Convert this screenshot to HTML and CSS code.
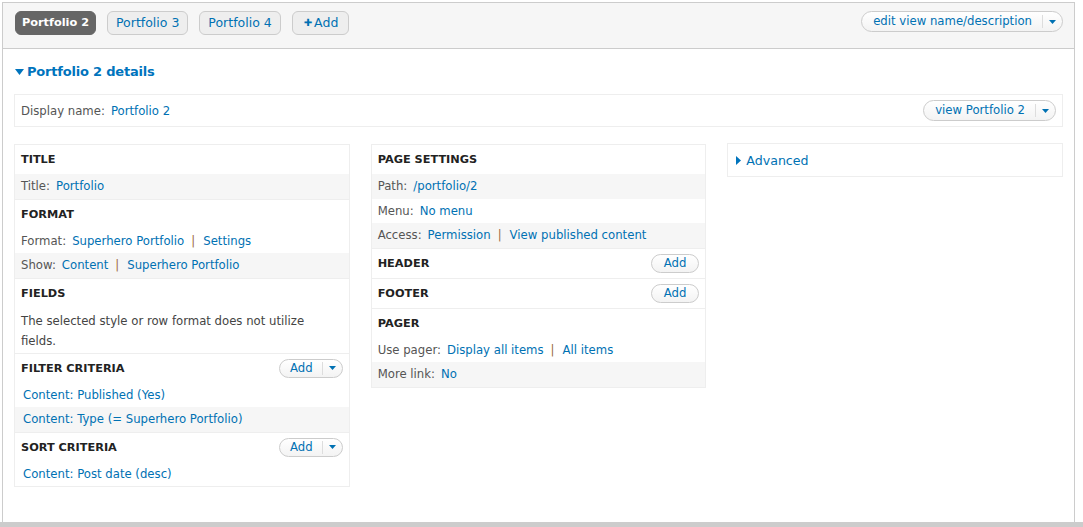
FILE: index.html
```html
<!DOCTYPE html>
<html>
<head>
<meta charset="utf-8">
<link rel="stylesheet" href="styles.css">
</head>
<body>
<div class="view">
  <div class="tabs-bar">
    <ul class="tabs">
      <li class="tab active">Portfolio 2</li>
      <li class="tab">Portfolio 3</li>
      <li class="tab">Portfolio 4</li>
      <li class="tab add"><span class="plus">✚</span>Add</li>
    </ul>
    <div class="dropbutton">
      <span class="db-main">edit view name/description</span>
      <span class="db-toggle"><svg width="7" height="4" viewBox="0 0 7 4"><path d="M0 0h7L3.5 4z" fill="#0071b3"/></svg></span>
    </div>
  </div>

  <div class="content">
    <h2 class="details-title"><svg class="tri-down" width="9" height="6" viewBox="0 0 9 6"><path d="M0 0h9L4.5 6z" fill="#0074bd"/></svg>Portfolio 2 details</h2>

    <div class="display-name">
      <div><span class="label">Display name:</span><a>Portfolio 2</a></div>
      <div class="dropbutton">
        <span class="db-main">view Portfolio 2</span>
        <span class="db-toggle"><svg width="7" height="4" viewBox="0 0 7 4"><path d="M0 0h7L3.5 4z" fill="#0071b3"/></svg></span>
      </div>
    </div>

    <div class="columns">
      <div class="col box">
        <section class="sec first">
          <div class="sec-head"><h3>Title</h3></div>
          <div class="row alt"><span class="label">Title:</span><a>Portfolio</a></div>
        </section>
        <section class="sec">
          <div class="sec-head"><h3>Format</h3></div>
          <div class="row"><span class="label">Format:</span><a>Superhero Portfolio</a><span class="sep">|</span><a>Settings</a></div>
          <div class="row alt"><span class="label">Show:</span><a>Content</a><span class="sep">|</span><a>Superhero Portfolio</a></div>
        </section>
        <section class="sec">
          <div class="sec-head"><h3>Fields</h3></div>
          <p class="note">The selected style or row format does not utilize fields.</p>
        </section>
        <section class="sec">
          <div class="sec-head"><h3>Filter criteria</h3>
            <div class="dropbutton small">
              <span class="db-main">Add</span>
              <span class="db-toggle"><svg width="7" height="4" viewBox="0 0 7 4"><path d="M0 0h7L3.5 4z" fill="#0071b3"/></svg></span>
            </div>
          </div>
          <div class="row ind"><a>Content: Published (Yes)</a></div>
          <div class="row ind alt"><a>Content: Type (= Superhero Portfolio)</a></div>
        </section>
        <section class="sec">
          <div class="sec-head"><h3>Sort criteria</h3>
            <div class="dropbutton small">
              <span class="db-main">Add</span>
              <span class="db-toggle"><svg width="7" height="4" viewBox="0 0 7 4"><path d="M0 0h7L3.5 4z" fill="#0071b3"/></svg></span>
            </div>
          </div>
          <div class="row ind"><a>Content: Post date (desc)</a></div>
        </section>
      </div>

      <div class="col box">
        <section class="sec first">
          <div class="sec-head"><h3>Page settings</h3></div>
          <div class="row alt"><span class="label">Path:</span><a>/portfolio/2</a></div>
          <div class="row"><span class="label">Menu:</span><a>No menu</a></div>
          <div class="row alt"><span class="label">Access:</span><a>Permission</a><span class="sep">|</span><a>View published content</a></div>
        </section>
        <section class="sec">
          <div class="sec-head"><h3>Header</h3><span class="btn-add">Add</span></div>
        </section>
        <section class="sec">
          <div class="sec-head"><h3>Footer</h3><span class="btn-add">Add</span></div>
        </section>
        <section class="sec">
          <div class="sec-head"><h3>Pager</h3></div>
          <div class="row"><span class="label">Use pager:</span><a>Display all items</a><span class="sep">|</span><a>All items</a></div>
          <div class="row alt"><span class="label">More link:</span><a>No</a></div>
        </section>
      </div>

      <div class="col">
        <div class="box advanced">
          <svg class="tri-right" width="5" height="9" viewBox="0 0 5 9"><path d="M0 0L5 4.5L0 9z" fill="#0074bd"/></svg><a>Advanced</a>
        </div>
      </div>
    </div>
  </div>
</div>
<div class="bottom-bar"></div>
</body>
</html>
```

FILE: styles.css
```css
html, body {
  margin: 0;
  padding: 0;
  background: #fff;
}
body {
  font-family: "DejaVu Sans", "Liberation Sans", sans-serif;
  font-size: 11.7px;
  color: #444;
}
a {
  color: #0071b3;
  text-decoration: none;
}
.view {
  box-sizing: border-box;
  margin: 2px 8px 0 2px;
  height: 520px;
  border: 1px solid #ccc;
  border-bottom: none;
}
.bottom-bar {
  height: 5px;
  background: #ccc;
}
.tabs-bar {
  height: 45px;
  background: #f6f6f6;
  border-bottom: 1px solid #ccc;
  display: flex;
  justify-content: space-between;
  align-items: flex-start;
  padding: 0 11px 0 12px;
}
.tabs {
  list-style: none;
  margin: 8px 0 0;
  padding: 0;
  display: flex;
  gap: 11px;
}
.tab {
  box-sizing: border-box;
  height: 24px;
  line-height: 22px;
  padding: 0 8px;
  border: 1px solid #ccc;
  border-radius: 6px;
  background: #eee;
  color: #0071b3;
  font-size: 12.5px;
}
.tab.active {
  background: #666;
  border-color: #666;
  color: #fff;
  font-weight: bold;
  font-size: 11.3px;
  padding: 0 6px;
}
.tab.add {
  padding: 0 10px 0 11px;
}
.plus {
  font-size: 10px;
  margin-right: 2px;
  position: relative;
  top: -1px;
}
.dropbutton {
  box-sizing: border-box;
  height: 21px;
  display: inline-flex;
  align-items: center;
  border: 1px solid #ccc;
  border-radius: 11px;
  background: linear-gradient(#fff, #f3f3f3);
  color: #0071b3;
  margin-top: 8px;
  white-space: nowrap;
}
.db-main {
  padding: 0 10px 0 11px;
  line-height: 19px;
}
.db-toggle {
  height: 13px;
  border-left: 1px solid #ddd;
  padding: 0 6px 0 6px;
  display: flex;
  align-items: center;
}
.content {
  padding: 14px 11px 0;
}
.details-title {
  margin: 0;
  font-size: 13px;
  letter-spacing: -0.2px;
  line-height: 18px;
  color: #0074bd;
  font-weight: bold;
  display: flex;
  align-items: center;
}
.tri-down {
  margin: 0 3px 0 1px;
}
.display-name {
  box-sizing: border-box;
  height: 33px;
  margin-top: 13px;
  border: 1px solid #eee;
  display: flex;
  justify-content: space-between;
  align-items: center;
  padding: 0 6px 0 6px;
}
.display-name .dropbutton {
  margin-top: 0;
  height: 21px;
}
.label {
  color: #555;
  margin-right: 6px;
}
.columns {
  margin-top: 17px;
  display: grid;
  grid-template-columns: 1fr 1fr 1fr;
  gap: 21px;
  align-items: start;
}
.box {
  border: 1px solid #eee;
}
.sec {
  border-top: 1px solid #eee;
}
.sec.first {
  border-top: none;
}
.sec-head {
  height: 29px;
  display: flex;
  justify-content: space-between;
  align-items: center;
  padding: 0 6px 0 6px;
}
.sec-head h3 {
  margin: 0;
  font-size: 11.3px;
  font-weight: bold;
  text-transform: uppercase;
  color: #222;
}
.row {
  height: 24.5px;
  line-height: 24px;
  padding: 0 6px;
  white-space: nowrap;
}
.row.alt {
  background: #f6f6f6;
}
.row.ind {
  padding-left: 8px;
}
.sep {
  color: #9a6a3e;
  margin: 0 8px 0 7px;
}
.note {
  margin: 0;
  padding: 3px 6px 2px;
  line-height: 20px;
  color: #444;
}
.dropbutton.small {
  height: 19px;
  margin-top: 0;
}
.dropbutton.small .db-main {
  padding: 0 9px 0 10px;
}
.btn-add {
  box-sizing: border-box;
  height: 19px;
  line-height: 17px;
  padding: 0 12px;
  border: 1px solid #ccc;
  border-radius: 10px;
  background: linear-gradient(#fff, #f3f3f3);
  color: #0071b3;
}
.advanced {
  box-sizing: border-box;
  height: 34px;
  margin-top: -1px;
  display: flex;
  align-items: center;
  padding: 0 8px;
  font-size: 12.6px;
}
.tri-right {
  margin-right: 5px;
}
```
